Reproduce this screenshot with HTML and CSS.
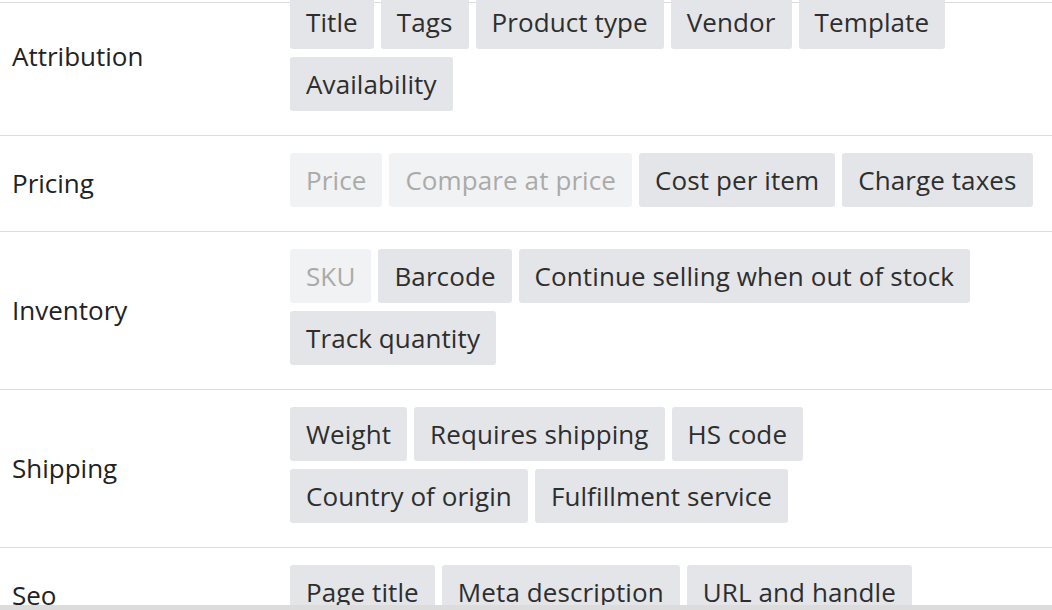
FILE: index.html
```html
<!DOCTYPE html>
<html lang="en">
<head>
<meta charset="utf-8">
<title>Fields</title>
<link rel="stylesheet" href="styles.css">
</head>
<body>
<div class="viewport">
  <div class="topline"></div>
  <div class="list">
    <section class="group">
      <div class="label">Attribution</div>
      <div class="chips">
        <span class="chip">Title</span>
        <span class="chip">Tags</span>
        <span class="chip">Product type</span>
        <span class="chip">Vendor</span>
        <span class="chip">Template</span>
        <span class="chip">Availability</span>
      </div>
    </section>
    <section class="group">
      <div class="label">Pricing</div>
      <div class="chips">
        <span class="chip chip-off">Price</span>
        <span class="chip chip-off">Compare at price</span>
        <span class="chip">Cost per item</span>
        <span class="chip">Charge taxes</span>
      </div>
    </section>
    <section class="group">
      <div class="label">Inventory</div>
      <div class="chips">
        <span class="chip chip-off">SKU</span>
        <span class="chip">Barcode</span>
        <span class="chip">Continue selling when out of stock</span>
        <span class="chip">Track quantity</span>
      </div>
    </section>
    <section class="group">
      <div class="label">Shipping</div>
      <div class="chips">
        <span class="chip">Weight</span>
        <span class="chip">Requires shipping</span>
        <span class="chip">HS code</span>
        <span class="chip">Country of origin</span>
        <span class="chip">Fulfillment service</span>
      </div>
    </section>
    <section class="group">
      <div class="label">Seo</div>
      <div class="chips">
        <span class="chip">Page title</span>
        <span class="chip">Meta description</span>
        <span class="chip">URL and handle</span>
      </div>
    </section>
  </div>
</div>
<div class="bottombar"></div>
</body>
</html>
```
FILE: styles.css
```css
* { box-sizing: border-box; }
html, body {
  margin: 0;
  padding: 0;
  background: #ffffff;
}
body {
  font-family: "Open Sans", "Noto Sans", sans-serif;
  color: #262626;
  width: 1052px;
  height: 610px;
  overflow: hidden;
}
.viewport {
  position: relative;
  height: 605px;
  overflow: hidden;
}
.topline {
  position: absolute;
  left: 0;
  right: 0;
  top: 2px;
  height: 1px;
  background: #dcdcdc;
}
.list {
  margin-top: -23px;
}
.group {
  display: grid;
  grid-template-columns: 290px 1fr;
  border-top: 1px solid #dcdcdc;
  padding: 17px 12px 24px 0;
}
.label {
  align-self: center;
  padding: 5px 0 0 12px;
  font-size: 26px;
  color: #222;
}
.chips {
  display: flex;
  flex-wrap: wrap;
  gap: 8px 7px;
  position: relative;
}
.chip {
  display: flex;
  align-items: center;
  height: 54px;
  padding: 0 16px;
  background: #e3e5e8;
  border-radius: 3px;
  font-size: 26px;
  letter-spacing: 0.1px;
  color: #2e2e2e;
  white-space: nowrap;
}
.chip-off {
  background: #f1f2f3;
  color: #aaaaaa;
}
.bottombar {
  height: 5px;
  background: #dcdcdc;
}
```
